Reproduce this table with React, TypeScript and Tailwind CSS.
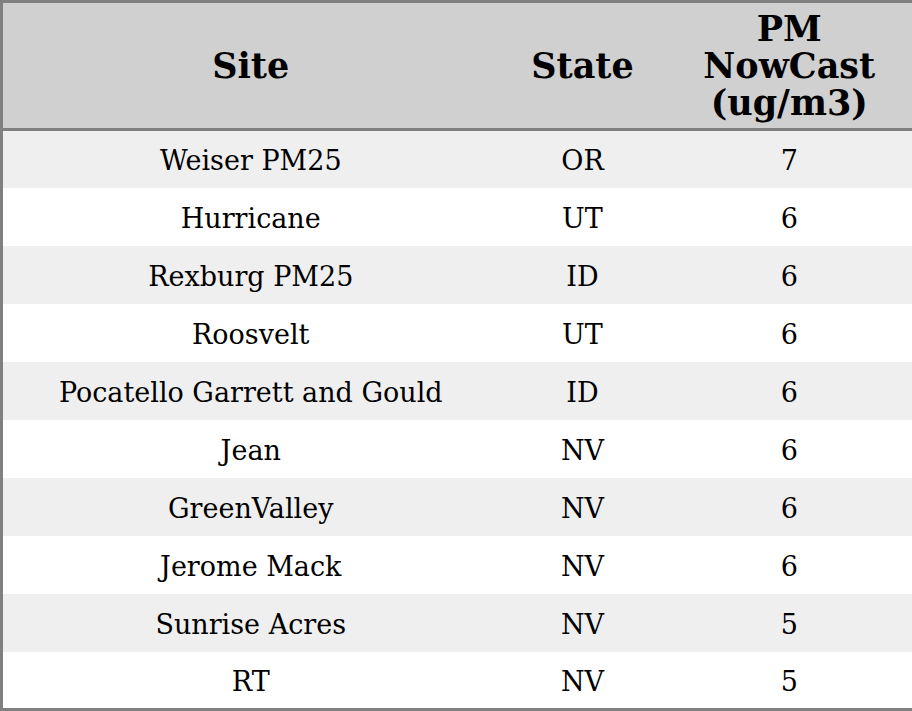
import React from 'react';

const ROWS: [string, string, number][] = [
  ['Weiser PM25', 'OR', 7],
  ['Hurricane', 'UT', 6],
  ['Rexburg PM25', 'ID', 6],
  ['Roosvelt', 'UT', 6],
  ['Pocatello Garrett and Gould', 'ID', 6],
  ['Jean', 'NV', 6],
  ['GreenValley', 'NV', 6],
  ['Jerome Mack', 'NV', 6],
  ['Sunrise Acres', 'NV', 5],
  ['RT', 'NV', 5],
];

const App: React.FC = () => {
  return (
    <div className="w-[912px] h-[711px] bg-white font-['DejaVu_Serif',serif] text-black">
      <table className="w-[912px] table-fixed border-collapse border-[3px] border-[#808080]">
        <colgroup>
          <col className="w-[497px]" />
          <col className="w-[168px]" />
          <col className="w-[247px]" />
        </colgroup>
        <thead>
          <tr className="h-[128px] bg-[#d0d0d0] border-b-[3px] border-[#808080]">
            <th className="text-[35px] font-bold leading-[37px] text-center align-middle">Site</th>
            <th className="text-[35px] font-bold leading-[37px] text-center align-middle">State</th>
            <th className="text-[35px] font-bold leading-[37px] text-center align-middle">
              PM
              <br />
              NowCast
              <br />
              (ug/m3)
            </th>
          </tr>
        </thead>
        <tbody>
          {ROWS.map(([site, state, val], i) => (
            <tr key={site} className={`h-[58px] ${i % 2 === 0 ? 'bg-[#efefef]' : 'bg-white'}`}>
              <td className="text-[27px] leading-[30px] text-center align-middle pt-1">{site}</td>
              <td className="text-[27px] leading-[30px] text-center align-middle pt-1">{state}</td>
              <td className="text-[27px] leading-[30px] text-center align-middle pt-1">{val}</td>
            </tr>
          ))}
        </tbody>
      </table>
    </div>
  );
};

export default App;
